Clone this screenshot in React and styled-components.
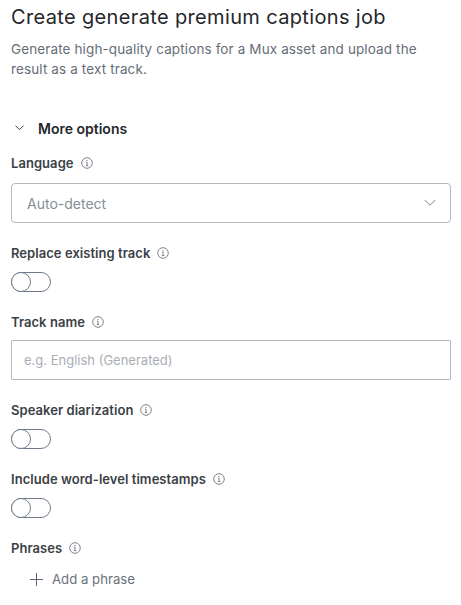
import React from "react";
import styled, { createGlobalStyle } from "styled-components";

const Global = createGlobalStyle`
  html, body { margin: 0; padding: 0; background: #fff; }
  body { font-family: Inter, "Noto Sans", sans-serif; }
`;

const Page = styled.div`
  width: 461px;
  height: 605px;
  overflow: hidden;
  box-sizing: border-box;
  padding: 4px 10px 0 11px;
  display: flex;
  flex-direction: column;
`;
const Title = styled.h1`
  margin: 0;
  font-size: 20px;
  line-height: 26px;
  font-weight: 400;
  color: #25272b;
  letter-spacing: 0.35px;
`;
const Description = styled.p`
  margin: 9px 0 0;
  font-size: 13.5px;
  line-height: 20px;
  font-weight: 400;
  color: #666d78;
  letter-spacing: 0.12px;
`;
const Section = styled.div`
  display: flex;
  align-items: center;
  gap: 14px;
  margin: 39px 0 0 4px;
  height: 20px;
  font-size: 14px;
  font-weight: 600;
  color: #25272b;
`;
const Field = styled.div`
  display: flex;
  flex-direction: column;
  align-items: flex-start;
  margin-top: ${(p) => p.$mt}px;
`;
const LabelRow = styled.div`
  display: flex;
  align-items: center;
  gap: 7px;
  height: 20px;
  font-size: 13px;
  font-weight: 600;
  color: #3b3f46;
  letter-spacing: 0.05px;
`;
const Select = styled.div`
  box-sizing: border-box;
  width: 440px;
  height: 40px;
  margin-top: 10px;
  padding: 0 14px 0 15px;
  border: 1px solid #b4b8bf;
  border-radius: 4px;
  display: flex;
  align-items: center;
  justify-content: space-between;
  font-size: 14px;
  color: #868d97;
`;
const Input = styled.div`
  box-sizing: border-box;
  width: 440px;
  height: 40px;
  margin-top: 8px;
  padding: 0 12px;
  border: 1px solid #b4b8bf;
  border-radius: 1px;
  display: flex;
  align-items: center;
  font-size: 13px;
  color: #a9aeb6;
`;
const Toggle = styled.div`
  box-sizing: border-box;
  width: 40px;
  height: 20px;
  margin-top: 9px;
  border: 1px solid #6f7b8c;
  border-radius: 10px;
  position: relative;
  background: #fff;
`;
const Knob = styled.div`
  box-sizing: border-box;
  width: 20px;
  height: 20px;
  position: absolute;
  left: -1px;
  top: -1px;
  border: 1px solid #6f7b8c;
  border-radius: 50%;
  background: #fff;
`;
const AddRow = styled.div`
  display: flex;
  align-items: center;
  gap: 8px;
  margin: 11px 0 0 19px;
  height: 20px;
  font-size: 13.2px;
  color: #6a717c;
`;
const AddText = styled.span`
  margin-left: 1px;
`;

const Info = () => (
  <svg width="12" height="12" viewBox="0 0 12 12" fill="none" stroke="#5f6671" strokeWidth="0.8">
    <circle cx="6" cy="6" r="5.3" />
    <path d="M4.9 5.2H6.1V8.6M4.8 8.6H7.3" />
    <path d="M6 3.1V4" strokeWidth="1" />
  </svg>
);
const Chevron = ({ size, color }) => (
  <svg width={size} height={size * 0.6} viewBox="0 0 10 6" fill="none" stroke={color} strokeWidth={10 / size}>
    <path d="M0.5 0.7L5 5.2L9.5 0.7" />
  </svg>
);
const Plus = () => (
  <svg width="13" height="13" viewBox="0 0 13 13" fill="none" stroke="#5f6671" strokeWidth="1">
    <path d="M6.5 0V13M0 6.5H13" />
  </svg>
);

const Label = ({ children }) => (
  <LabelRow>
    {children}
    <Info />
  </LabelRow>
);
const Switch = () => (
  <Toggle>
    <Knob />
  </Toggle>
);

export default function App() {
  return (
    <Page>
      <Global />
      <Title>Create generate premium captions job</Title>
      <Description>
        Generate high-quality captions for a Mux asset and upload the result as a text track.
      </Description>
      <Section>
        <Chevron size={9} color="#3b3f46" />
        More options
      </Section>
      <Field $mt={15}>
        <Label>Language</Label>
        <Select>
          Auto-detect
          <Chevron size={12} color="#7f8691" />
        </Select>
      </Field>
      <Field $mt={20}>
        <Label>Replace existing track</Label>
        <Switch />
      </Field>
      <Field $mt={20}>
        <Label>Track name</Label>
        <Input>e.g. English (Generated)</Input>
      </Field>
      <Field $mt={20}>
        <Label>Speaker diarization</Label>
        <Switch />
      </Field>
      <Field $mt={20}>
        <Label>Include word-level timestamps</Label>
        <Switch />
      </Field>
      <Field $mt={20}>
        <Label>Phrases</Label>
        <AddRow>
          <Plus />
          <AddText>Add a phrase</AddText>
        </AddRow>
      </Field>
    </Page>
  );
}
